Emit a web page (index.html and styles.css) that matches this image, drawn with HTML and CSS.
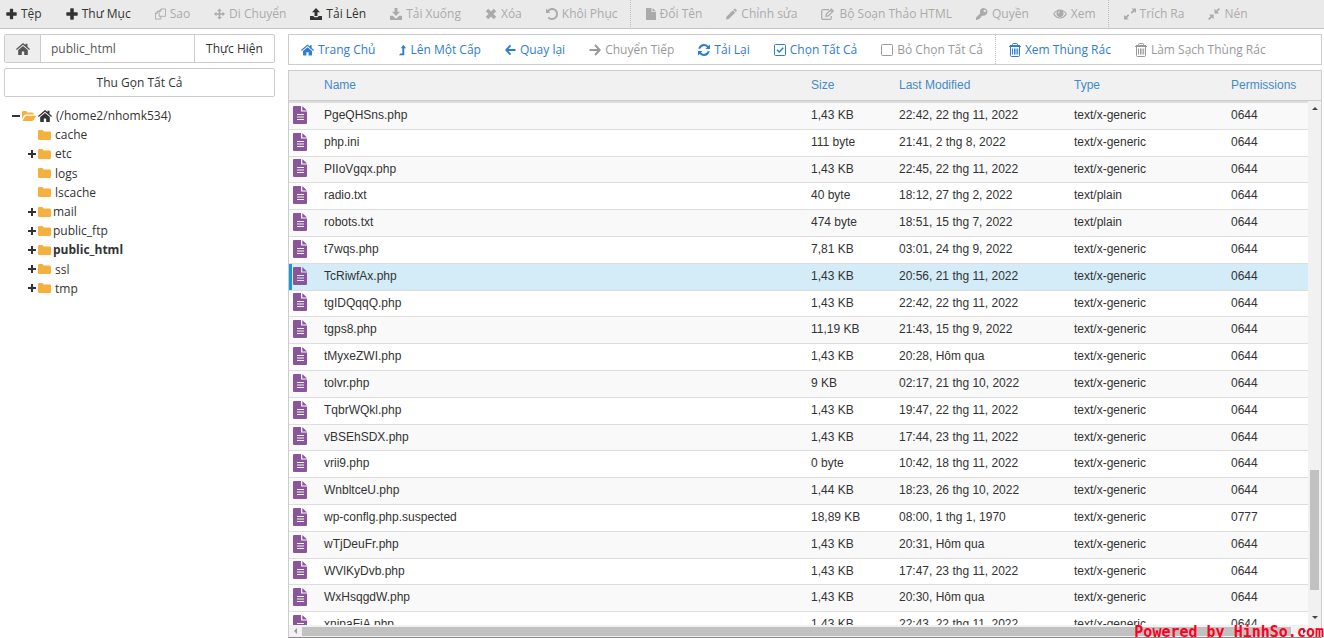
FILE: index.html
```html
<!DOCTYPE html>
<html lang="vi">
<head>
<meta charset="utf-8">
<title>public_html</title>
<link rel="stylesheet" href="styles.css">
</head>
<body>
<svg class="sprite" aria-hidden="true">
  <symbol id="plus" viewBox="0 0 12 12"><path d="M4.200 1q0-.7.7-.7h2.200q.7 0 .7.7v3.200h3.200q.7 0 .7.7v2.200q0 .7-.7.7H7.800v3.200q0 .7-.7.7H4.900q-.7 0-.7-.7V7.800H1q-.7 0-.7-.7V4.900q0-.7.7-.7h3.200z"/></symbol>
  <symbol id="copy" viewBox="0 0 12 12"><path fill="none" stroke="currentColor" d="M6.500.500h5v8h-7v-6zM6.500.500v2.500h-2M4.500 3h-2l-2 2v6.500h6v-3M2.500 3v2.500h-2"/></symbol>
  <symbol id="move" viewBox="0 0 12 12"><path d="M6 0l2.500 2.700H6.900v2.400h2.400V3.500L12 6 9.300 8.500V6.900H6.900v2.400h1.600L6 12 3.500 9.300h1.600V6.900H2.700v1.600L0 6l2.700-2.500v1.600h2.400V2.700H3.500z"/></symbol>
  <symbol id="upload" viewBox="0 0 12 12"><path d="M6 0l4 4.300H7.500V8h-3V4.300H2zM0 8h3.500q.3 1.200 1.300 1.200h2.400q1 0 1.300-1.200H12v4H0z"/></symbol>
  <symbol id="download" viewBox="0 0 12 12"><path d="M4.500 0h3v3.700H10L6 8 2 3.700h2.500zM0 7.800h2.800L5 10q1 .8 2 0l2.200-2.200H12V12H0z"/></symbol>
  <symbol id="cross" viewBox="0 0 12 12"><path d="M3.200.8L6 3.600 8.800.8l2.400 2.400L8.400 6l2.800 2.800-2.400 2.400L6 8.400l-2.800 2.800L.8 8.800 3.600 6 .8 3.200z"/></symbol>
  <symbol id="undo" viewBox="0 0 12 12"><path d="M0 .5l1.500 1.500A6 6 0 1 1 1.600 10l1.300-1.300A4.100 4.100 0 1 0 2.900 3.400L4.400 5H0z"/></symbol>
  <symbol id="file" viewBox="0 0 10 12"><path d="M0 .5Q0 0 .5 0H5.500v4H10v7.500q0 .5-.5.5h-9Q0 12 0 11.500zM6.500 0L10 3.200H6.500z"/></symbol>
  <symbol id="pencil" viewBox="0 0 12 12"><path d="M7.500 2L10 4.500 3 11.500 0 12l.5-3zM8.200 1.300l1-1q.5-.5 1 0l1.500 1.500q.5.500 0 1l-1 1z"/></symbol>
  <symbol id="edit" viewBox="0 0 14 12"><path fill="none" stroke="currentColor" stroke-width="1.200" d="M8 1.600H2Q.7 1.600.7 3v7q0 1.300 1.300 1.300h7q1.300 0 1.300-1.300V8M5 8.200l.4-2.200 5-5 1.900 1.900-5 5zM9.300 2.200l1.800 1.800"/></symbol>
  <symbol id="key" viewBox="0 0 12 12"><path fill-rule="evenodd" d="M4.200 2.200A3.800 3.800 0 1 1 6.300 7.500L5.100 8.700l.1 1H4l-.2 1.300H2.600L1.500 12H0v-2.400l4.300-4.300q-.6-1.500-.1-3.100zM8.700 1.700a1.200 1.200 0 1 0 .1 0z"/></symbol>
  <symbol id="eye" viewBox="0 0 14 10"><path fill-rule="evenodd" d="M0 5q2.800-4.500 7-4.500T14 5q-2.800 4.500-7 4.500T0 5zM1.300 5Q4 8.500 7 8.500T12.700 5Q11.500 3 9.600 2q1 1.100 1 2.600A3.600 3.600 0 1 1 4.400 2Q2.500 3 1.300 5zM5 4.500h.8Q5.800 3.200 7 3.100v-.8Q5.200 2.400 5 4.500z"/></symbol>
  <symbol id="expand" viewBox="0 0 13 12"><path d="M8 0h5v5l-1.700-1.700-2.800 2.400-1.200-1.200 2.500-2.800zM0 7l1.700 1.700 2.800-2.400 1.200 1.200-2.500 2.800L5 12H0z"/></symbol>
  <symbol id="compress" viewBox="0 0 12 12"><path d="M6.500.8l1.700 1.800L10.800 0 12 1.200 9.400 3.800l1.700 1.700H6.500zM1 6.500h4.600v4.600L3.900 9.400 1.200 12 0 10.800l2.700-2.600z"/></symbol>
  <symbol id="home" viewBox="0 0 14 12"><path d="M7 3l4.800 4v4.500q0 .5-.5.5H8.200V8.500H5.800V12H2.700q-.5 0-.5-.5V7zM7 0l2.500 2.100V.8h2v3L14 6l-.8 1L7 1.800.8 7 0 6z"/></symbol>
  <symbol id="levelup" viewBox="0 0 8 12"><path d="M5 0l3 4H6v7q0 1-1 1H0l1.500-2h2.300V4H2z"/></symbol>
  <symbol id="left" viewBox="0 0 12 12"><path fill="none" stroke="currentColor" stroke-width="2" d="M11.500 6H1.500M6 1L1.300 6 6 11"/></symbol>
  <symbol id="right" viewBox="0 0 12 12"><path fill="none" stroke="currentColor" stroke-width="2" d="M.5 6h10M6 1l4.700 5L6 11"/></symbol>
  <symbol id="refresh" viewBox="0 0 12 12"><path d="M12 .5V5H7.500L9 3.400Q7.800 2 6 2 3.600 2 2.300 4.700H.3Q1.500 0 6 0q2.600 0 4.400 1.900zM0 11.500V7h4.500L3 8.600Q4.200 10 6 10q2.400 0 3.700-2.700h2Q10.500 12 6 12q-2.600 0-4.400-1.900z"/></symbol>
  <symbol id="checked" viewBox="0 0 12 12"><path fill="none" stroke="currentColor" d="M.5 1.500Q.5.500 1.500.500h9q1 0 1 1v9q0 1-1 1h-9q-1 0-1-1z"/><path fill="none" stroke="currentColor" stroke-width="1.500" d="M3 5.800L5.200 8 9.300 3.700"/></symbol>
  <symbol id="unchecked" viewBox="0 0 12 12"><path fill="none" stroke="currentColor" d="M.5 1.500Q.5.500 1.500.500h9q1 0 1 1v9q0 1-1 1h-9q-1 0-1-1z"/></symbol>
  <symbol id="trash" viewBox="0 0 12 14"><path fill="none" stroke="currentColor" d="M0 3.500h12M3.500 3V1.500q0-1 1-1h3q1 0 1 1V3M1.500 3.500v9q0 1 1 1h7q1 0 1-1v-9M3.500 5.500v6M5.500 5.500v6M7 5.500v6M8.700 5.500v6M1 2.500h10"/></symbol>
  <symbol id="folder" viewBox="0 0 13 10"><path d="M0 1.300Q0 0 1.300 0h3q1.200 0 1.200 1.500h6.200q1.300 0 1.300 1.300v5.900q0 1.300-1.300 1.300H1.300Q0 10 0 8.700z"/></symbol>
  <symbol id="openfolder" viewBox="0 0 14 10"><path d="M0 8V1.200Q0 0 1.200 0h2.600Q5 0 5 1.500h5.300q1.200 0 1.200 1.200v.8H4q-1.300 0-2.200 1.200zM.7 9.600l2.400-4Q3.600 4.700 4.500 4.700h9q.9 0 .3.900l-2.200 3.500q-.5.900-1.400.9H1q-.5 0-.3-.4z"/></symbol>
  <symbol id="doc" viewBox="0 0 14 18"><path fill-rule="evenodd" d="M0 1q0-1 1-1h7v5.500h6V17q0 1-1 1H1q-1 0-1-1zM9.300 0L14 4.500H9.300zM4 8h7v1H4zM4 10.500h7v1H4zM4 13h7v1H4z"/></symbol>
</svg>

<nav class="topbar" aria-label="Tệp">
  <button class="tool"><svg class="i11"><use href="#plus"/></svg>Tệp</button>
  <button class="tool"><svg class="i12"><use href="#plus"/></svg>Thư Mục</button>
  <button class="tool" disabled><svg class="i11"><use href="#copy"/></svg>Sao</button>
  <button class="tool" disabled><svg class="i11"><use href="#move"/></svg>Di Chuyển</button>
  <button class="tool"><svg class="i12"><use href="#upload"/></svg>Tải Lên</button>
  <button class="tool" disabled><svg class="i12"><use href="#download"/></svg>Tải Xuống</button>
  <button class="tool" disabled><svg class="i12"><use href="#cross"/></svg>Xóa</button>
  <button class="tool" disabled><svg class="i12"><use href="#undo"/></svg>Khôi Phục</button>
  <span class="sep"></span>
  <button class="tool" disabled><svg class="i10"><use href="#file"/></svg>Đổi Tên</button>
  <button class="tool" disabled><svg class="i11"><use href="#pencil"/></svg>Chỉnh sửa</button>
  <button class="tool" disabled><svg class="i14"><use href="#edit"/></svg>Bộ Soạn Thảo HTML</button>
  <button class="tool" disabled><svg class="i12"><use href="#key"/></svg>Quyền</button>
  <button class="tool" disabled><svg class="i14"><use href="#eye"/></svg>Xem</button>
  <span class="sep"></span>
  <button class="tool" disabled><svg class="i12"><use href="#expand"/></svg>Trích Ra</button>
  <button class="tool" disabled><svg class="i12"><use href="#compress"/></svg>Nén</button>
</nav>

<div class="workspace">
  <aside class="sidebar">
    <form class="location">
      <button type="button" class="home" aria-label="Trang Chủ"><svg class="i14"><use href="#home"/></svg></button>
      <input class="path" type="text" value="public_html" aria-label="Đường dẫn">
      <button type="button" class="go">Thực Hiện</button>
    </form>
    <button class="collapse">Thu Gọn Tất Cả</button>
    <ul class="tree">
      <li><div class="node"><button class="toggle minus" aria-label="Thu gọn"></button><svg class="i14 folder"><use href="#openfolder"/></svg><svg class="i14"><use href="#home"/></svg><span>(/home2/nhomk534)</span></div>
        <ul>
          <li class="node"><span class="toggle"></span><svg class="i13 folder"><use href="#folder"/></svg><span>cache</span></li>
          <li class="node"><button class="toggle plus" aria-label="Mở etc"></button><svg class="i13 folder"><use href="#folder"/></svg><span>etc</span></li>
          <li class="node"><span class="toggle"></span><svg class="i13 folder"><use href="#folder"/></svg><span>logs</span></li>
          <li class="node"><span class="toggle"></span><svg class="i13 folder"><use href="#folder"/></svg><span>lscache</span></li>
          <li class="node tight"><button class="toggle plus" aria-label="Mở mail"></button><svg class="i13 folder"><use href="#folder"/></svg><span>mail</span></li>
          <li class="node tight"><button class="toggle plus" aria-label="Mở public_ftp"></button><svg class="i13 folder"><use href="#folder"/></svg><span>public_ftp</span></li>
          <li class="node tight"><button class="toggle plus" aria-label="Mở public_html"></button><svg class="i13 folder"><use href="#folder"/></svg><strong>public_html</strong></li>
          <li class="node"><button class="toggle plus" aria-label="Mở ssl"></button><svg class="i13 folder"><use href="#folder"/></svg><span>ssl</span></li>
          <li class="node"><button class="toggle plus" aria-label="Mở tmp"></button><svg class="i13 folder"><use href="#folder"/></svg><span>tmp</span></li>
        </ul>
      </li>
    </ul>
  </aside>

  <main class="content">
    <nav class="actions" aria-label="Điều hướng">
      <button class="tool"><svg class="i13"><use href="#home"/></svg>Trang Chủ</button>
      <button class="tool"><svg class="i7"><use href="#levelup"/></svg>Lên Một Cấp</button>
      <button class="tool"><svg class="i11"><use href="#left"/></svg>Quay lại</button>
      <button class="tool" disabled><svg class="i12"><use href="#right"/></svg>Chuyển Tiếp</button>
      <button class="tool"><svg class="i12"><use href="#refresh"/></svg>Tải Lại</button>
      <button class="tool"><svg class="i12"><use href="#checked"/></svg>Chọn Tất Cả</button>
      <button class="tool" disabled><svg class="i12"><use href="#unchecked"/></svg>Bỏ Chọn Tất Cả</button>
      <span class="sep"></span>
      <button class="tool"><svg class="i12 tall"><use href="#trash"/></svg>Xem Thùng Rác</button>
      <button class="tool" disabled><svg class="i12 tall"><use href="#trash"/></svg>Làm Sạch Thùng Rác</button>
    </nav>

    <section class="files">
      <div class="listing">
        <table>
          <colgroup><col class="c-icon"><col><col class="c-size"><col class="c-date"><col class="c-type"><col class="c-perm"></colgroup>
          <thead><tr><th></th><th>Name</th><th>Size</th><th>Last Modified</th><th>Type</th><th>Permissions</th></tr></thead>
          <tbody>
            <tr><td><svg class="doc"><use href="#doc"/></svg></td><td>PgeQHSns.php</td><td>1,43 KB</td><td>22:42, 22 thg 11, 2022</td><td>text/x-generic</td><td>0644</td></tr>
            <tr><td><svg class="doc"><use href="#doc"/></svg></td><td>php.ini</td><td>111 byte</td><td>21:41, 2 thg 8, 2022</td><td>text/x-generic</td><td>0644</td></tr>
            <tr><td><svg class="doc"><use href="#doc"/></svg></td><td>PIIoVgqx.php</td><td>1,43 KB</td><td>22:45, 22 thg 11, 2022</td><td>text/x-generic</td><td>0644</td></tr>
            <tr><td><svg class="doc"><use href="#doc"/></svg></td><td>radio.txt</td><td>40 byte</td><td>18:12, 27 thg 2, 2022</td><td>text/plain</td><td>0644</td></tr>
            <tr><td><svg class="doc"><use href="#doc"/></svg></td><td>robots.txt</td><td>474 byte</td><td>18:51, 15 thg 7, 2022</td><td>text/plain</td><td>0644</td></tr>
            <tr><td><svg class="doc"><use href="#doc"/></svg></td><td>t7wqs.php</td><td>7,81 KB</td><td>03:01, 24 thg 9, 2022</td><td>text/x-generic</td><td>0644</td></tr>
            <tr class="selected"><td><svg class="doc"><use href="#doc"/></svg></td><td>TcRiwfAx.php</td><td>1,43 KB</td><td>20:56, 21 thg 11, 2022</td><td>text/x-generic</td><td>0644</td></tr>
            <tr><td><svg class="doc"><use href="#doc"/></svg></td><td>tgIDQqqQ.php</td><td>1,43 KB</td><td>22:42, 22 thg 11, 2022</td><td>text/x-generic</td><td>0644</td></tr>
            <tr><td><svg class="doc"><use href="#doc"/></svg></td><td>tgps8.php</td><td>11,19 KB</td><td>21:43, 15 thg 9, 2022</td><td>text/x-generic</td><td>0644</td></tr>
            <tr><td><svg class="doc"><use href="#doc"/></svg></td><td>tMyxeZWI.php</td><td>1,43 KB</td><td>20:28, Hôm qua</td><td>text/x-generic</td><td>0644</td></tr>
            <tr><td><svg class="doc"><use href="#doc"/></svg></td><td>tolvr.php</td><td>9 KB</td><td>02:17, 21 thg 10, 2022</td><td>text/x-generic</td><td>0644</td></tr>
            <tr><td><svg class="doc"><use href="#doc"/></svg></td><td>TqbrWQkl.php</td><td>1,43 KB</td><td>19:47, 22 thg 11, 2022</td><td>text/x-generic</td><td>0644</td></tr>
            <tr><td><svg class="doc"><use href="#doc"/></svg></td><td>vBSEhSDX.php</td><td>1,43 KB</td><td>17:44, 23 thg 11, 2022</td><td>text/x-generic</td><td>0644</td></tr>
            <tr><td><svg class="doc"><use href="#doc"/></svg></td><td>vrii9.php</td><td>0 byte</td><td>10:42, 18 thg 11, 2022</td><td>text/x-generic</td><td>0644</td></tr>
            <tr><td><svg class="doc"><use href="#doc"/></svg></td><td>WnbltceU.php</td><td>1,44 KB</td><td>18:23, 26 thg 10, 2022</td><td>text/x-generic</td><td>0644</td></tr>
            <tr><td><svg class="doc"><use href="#doc"/></svg></td><td>wp-conflg.php.suspected</td><td>18,89 KB</td><td>08:00, 1 thg 1, 1970</td><td>text/x-generic</td><td>0777</td></tr>
            <tr><td><svg class="doc"><use href="#doc"/></svg></td><td>wTjDeuFr.php</td><td>1,43 KB</td><td>20:31, Hôm qua</td><td>text/x-generic</td><td>0644</td></tr>
            <tr><td><svg class="doc"><use href="#doc"/></svg></td><td>WVlKyDvb.php</td><td>1,43 KB</td><td>17:47, 23 thg 11, 2022</td><td>text/x-generic</td><td>0644</td></tr>
            <tr><td><svg class="doc"><use href="#doc"/></svg></td><td>WxHsqgdW.php</td><td>1,43 KB</td><td>20:30, Hôm qua</td><td>text/x-generic</td><td>0644</td></tr>
            <tr><td><svg class="doc"><use href="#doc"/></svg></td><td>xnipaFiA.php</td><td>1,43 KB</td><td>22:43, 22 thg 11, 2022</td><td>text/x-generic</td><td>0644</td></tr>
          </tbody>
        </table>
      </div>
      <div class="rail">
        <div class="railhead"></div>
        <div class="vscroll"><span class="arrow up"></span><span class="vbefore"></span><span class="vthumb"></span><span class="vafter"></span><span class="arrow down"></span></div>
      </div>
      <div class="hscroll"><span class="arrow prev"></span><span class="hthumb"></span><span class="arrow next"></span></div>
    </section>
  </main>
</div>
<div class="watermark">Powered by HinhSo.com</div>
</body>
</html>
```

FILE: styles.css
```css
* { box-sizing: border-box; }
body {
  margin: 0;
  height: 100vh;
  display: flex;
  flex-direction: column;
  overflow: hidden;
  position: relative;
  background: #fff;
  color: #333;
  font: 12px/1.6 "Open Sans", sans-serif;
}
button, input { font: inherit; color: inherit; margin: 0; }
button { border: 0; background: none; padding: 0; }
svg { fill: currentColor; flex: none; height: 12px; }
.sprite { position: absolute; width: 0; height: 0; }
.i7 { width: 7px; }
.i10 { width: 10px; }
.i11 { width: 11px; }
.i12 { width: 12px; }
.i13 { width: 13px; }
.i14 { width: 14px; }
.tall { height: 14px; }

.topbar {
  display: flex;
  flex: none;
  height: 29px;
  background: #eaeaea;
  border-bottom: 1px solid #c4c4c4;
  padding-bottom: 1px;
}
.tool {
  display: flex;
  align-items: center;
  gap: 4px;
  padding: 0 12px;
  white-space: nowrap;
}
.topbar .tool:first-child { padding-left: 6px; }
.tool:disabled { color: #aaa; }
.sep { border-left: 1px dotted #bbb; margin-right: 3px; }

.workspace { flex: 1; min-height: 0; display: flex; gap: 13px; padding: 5px 2px 0 4px; }
.sidebar { flex: none; width: 271px; }
.location { display: flex; height: 29px; border: 1px solid #ccc; border-radius: 2px; }
.home {
  display: flex;
  align-items: center;
  justify-content: center;
  width: 36px;
  background: #eee;
  border-right: 1px solid #ccc;
  color: #555;
}
.path { flex: 1; min-width: 0; border: 0; padding: 0 10px; color: #555; outline: 0; }
.go { width: 80px; border-left: 1px solid #ccc; }
.collapse {
  width: 100%;
  height: 29px;
  margin-top: 5px;
  border: 1px solid #ccc;
  border-radius: 2px;
}
.tree, .tree ul { list-style: none; margin: 0; padding: 0; }
.tree { padding: 9px 0 0 8px; }
.tree ul { padding-left: 16px; }
.node { display: flex; align-items: center; gap: 2px; }
.folder { color: #f5b13d; height: 10px; }
.tree span:last-child { padding-left: 2px; }
.tree .tight span:last-child { padding-left: 0; }
.toggle {
  width: 8px;
  height: 8px;
  background-repeat: no-repeat;
  background-position: center;
}
.minus, .plus { background-image: linear-gradient(#333, #333), linear-gradient(#333, #333); }
.minus { background-size: 8px 2px; }
.plus { background-size: 8px 2px, 2px 8px; }

.content { flex: 1; min-width: 0; display: flex; flex-direction: column; gap: 5px; }
.actions { display: flex; flex: none; height: 31px; border: 1px solid #ccc; color: #2f7cd0; }
.actions .tool:disabled { color: #999; }
.actions .sep { margin-right: 1px; }

.files {
  flex: 1;
  min-height: 0;
  display: grid;
  grid-template-columns: 1fr 13px;
  grid-template-rows: 1fr 12px;
  border: 1px solid #ccc;
  border-bottom-color: #888;
  font-family: "Liberation Sans", Arial, sans-serif;
}
.listing { overflow: hidden; min-height: 0; }
table { width: 100%; table-layout: fixed; border-collapse: separate; border-spacing: 0; line-height: 1.4; }
.c-icon { width: 35px; }
.c-size { width: 88px; }
.c-date { width: 175px; }
.c-type { width: 157px; }
.c-perm { width: 77px; }
th {
  height: 30px;
  padding: 0;
  background: #f1f1f1;
  border-bottom: 1px solid #ccc;
  color: #428bca;
  font-weight: normal;
  text-align: left;
}
td { padding: 4px 0 5px; border-bottom: 1px solid #ddd; white-space: nowrap; }
td:first-child { padding: 0 0 2px 4px; }
tbody tr:first-child td { border-top: 2px solid #ddd; }
tbody tr:nth-child(odd) { background: #f9f9f9; }
tbody tr.selected { background: #d4ebf8; }
.selected td:first-child { box-shadow: inset 3px 0 #179bd7; }
.doc { display: block; width: 14px; height: 18px; color: #8a559b; }

.rail { display: flex; flex-direction: column; }
.railhead { height: 30px; background: #f1f1f1; border-bottom: 1px solid #ccc; }
.vscroll { flex: 1; display: flex; flex-direction: column; align-items: center; background: #f1f1f1; padding: 6px 0; }
.vbefore { flex: 357; }
.vthumb { flex: 119; width: 9px; background: #c1c1c1; }
.vafter { flex: 26; }
.hscroll { grid-column: 1 / -1; display: flex; align-items: center; gap: 5px; padding: 0 15px 0 5px; background: #f1f1f1; }
.hthumb { flex: 1; height: 9px; background: #c1c1c1; margin-right: 7px; }
.arrow { border: 3px solid transparent; }
.up { border-top: 0; border-bottom-color: #444; }
.down { border-bottom: 0; border-top-color: #444; }
.prev { border-left: 0; border-right-color: #999; }
.next { border-right: 0; border-left-color: #444; }
.watermark {
  position: absolute;
  right: 0;
  bottom: -2px;
  color: #ff0022;
  font: bold 15px/16px "DejaVu Sans Mono", monospace;
}
```
